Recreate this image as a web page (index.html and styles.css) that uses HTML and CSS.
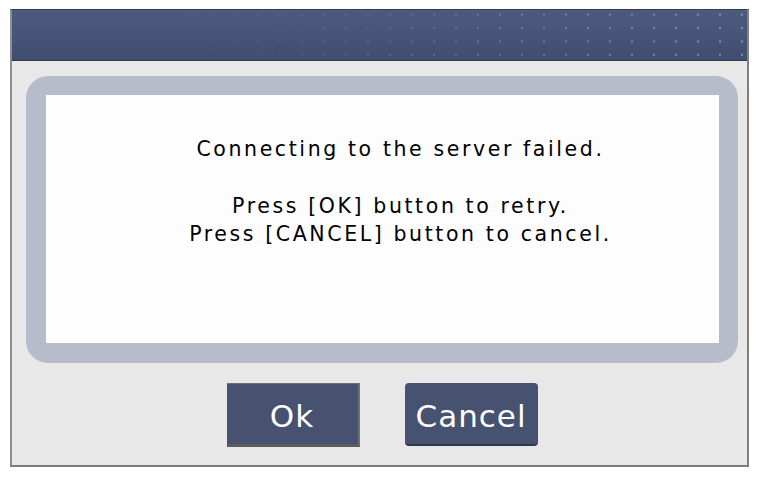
FILE: index.html
```html
<!DOCTYPE html>
<html lang="en">
<head>
<meta charset="utf-8">
<title>Connection error</title>
<link rel="stylesheet" href="styles.css">
</head>
<body>
<div class="window">
  <div class="titlebar"></div>
  <div class="content">
    <div class="panel">
      <div class="message">
        <p class="msg-line msg-first">Connecting to the server failed.</p>
        <p class="msg-line">Press [OK] button to retry.</p>
        <p class="msg-line">Press [CANCEL] button to cancel.</p>
      </div>
    </div>
    <div class="actions">
      <button class="btn btn-ok" type="button">Ok</button>
      <button class="btn btn-cancel" type="button">Cancel</button>
    </div>
  </div>
</div>
</body>
</html>
```
FILE: styles.css
```css
html, body {
  margin: 0;
  padding: 0;
  background: #ffffff;
}

body {
  padding: 9px 0 0 10px;
  font-family: "DejaVu Sans", "Liberation Sans", sans-serif;
}

.window {
  width: 739px;
  height: 458px;
  box-sizing: border-box;
  border-top: 1px solid #3a3d44;
  border-left: 2px solid #8e8e8e;
  border-right: 2px solid #808080;
  border-bottom: 2px solid #7c7c7c;
  display: flex;
  flex-direction: column;
  background: #e8e8e8;
}

.titlebar {
  position: relative;
  height: 51px;
  box-sizing: border-box;
  border-bottom: 1px solid #2f3a52;
  background: linear-gradient(to bottom, #4b5a7e 0%, #465578 50%, #3f4d6e 100%);
}

.titlebar::before {
  content: "";
  position: absolute;
  inset: 0;
  background-image: radial-gradient(circle, rgba(140, 158, 190, 0.8) 0.9px, rgba(140, 158, 190, 0) 1.6px);
  background-size: 22px 13.4px;
  background-position: -7px -2px;
  -webkit-mask-image: linear-gradient(to right, transparent 20%, rgba(0,0,0,0.45) 60%, #000 100%);
  mask-image: linear-gradient(to right, transparent 20%, rgba(0,0,0,0.45) 60%, #000 100%);
}

.content {
  flex: 1;
  display: flex;
  flex-direction: column;
  padding: 15px 9px 0 14px;
}

.panel {
  background: #b7bccb;
  border-radius: 22px;
  padding: 19px 19px 20px 20px;
}

.message {
  height: 248px;
  box-sizing: border-box;
  background: #fdfdfd;
  padding: 40px 0 0 36px;
  font-family: "DejaVu Sans", "Liberation Sans", sans-serif;
  font-size: 20.5px;
  letter-spacing: 2.6px;
  line-height: 28px;
  color: #000;
  text-align: center;
}

.msg-line {
  margin: 0;
  white-space: pre;
}

.msg-first {
  margin-bottom: 29px;
}

.actions {
  display: flex;
  justify-content: center;
  gap: 45px;
  margin-top: 20px;
}

.btn {
  width: 133px;
  height: 64px;
  box-sizing: border-box;
  margin: 0;
  padding: 4px 0 0 0;
  border: none;
  background: #46526f;
  color: #ffffff;
  font-family: "DejaVu Sans", "Liberation Sans", sans-serif;
  font-size: 31px;
  letter-spacing: 1px;
  display: flex;
  align-items: center;
  justify-content: center;
}

.btn-ok {
  border-right: 2px solid #707070;
  border-bottom: 3px solid #5c5c5c;
  border-top: 1px solid #6a6f7a;
}

.btn-cancel {
  border-radius: 4px;
  border-bottom: 2px solid #2f3852;
  height: 63px;
}
```
